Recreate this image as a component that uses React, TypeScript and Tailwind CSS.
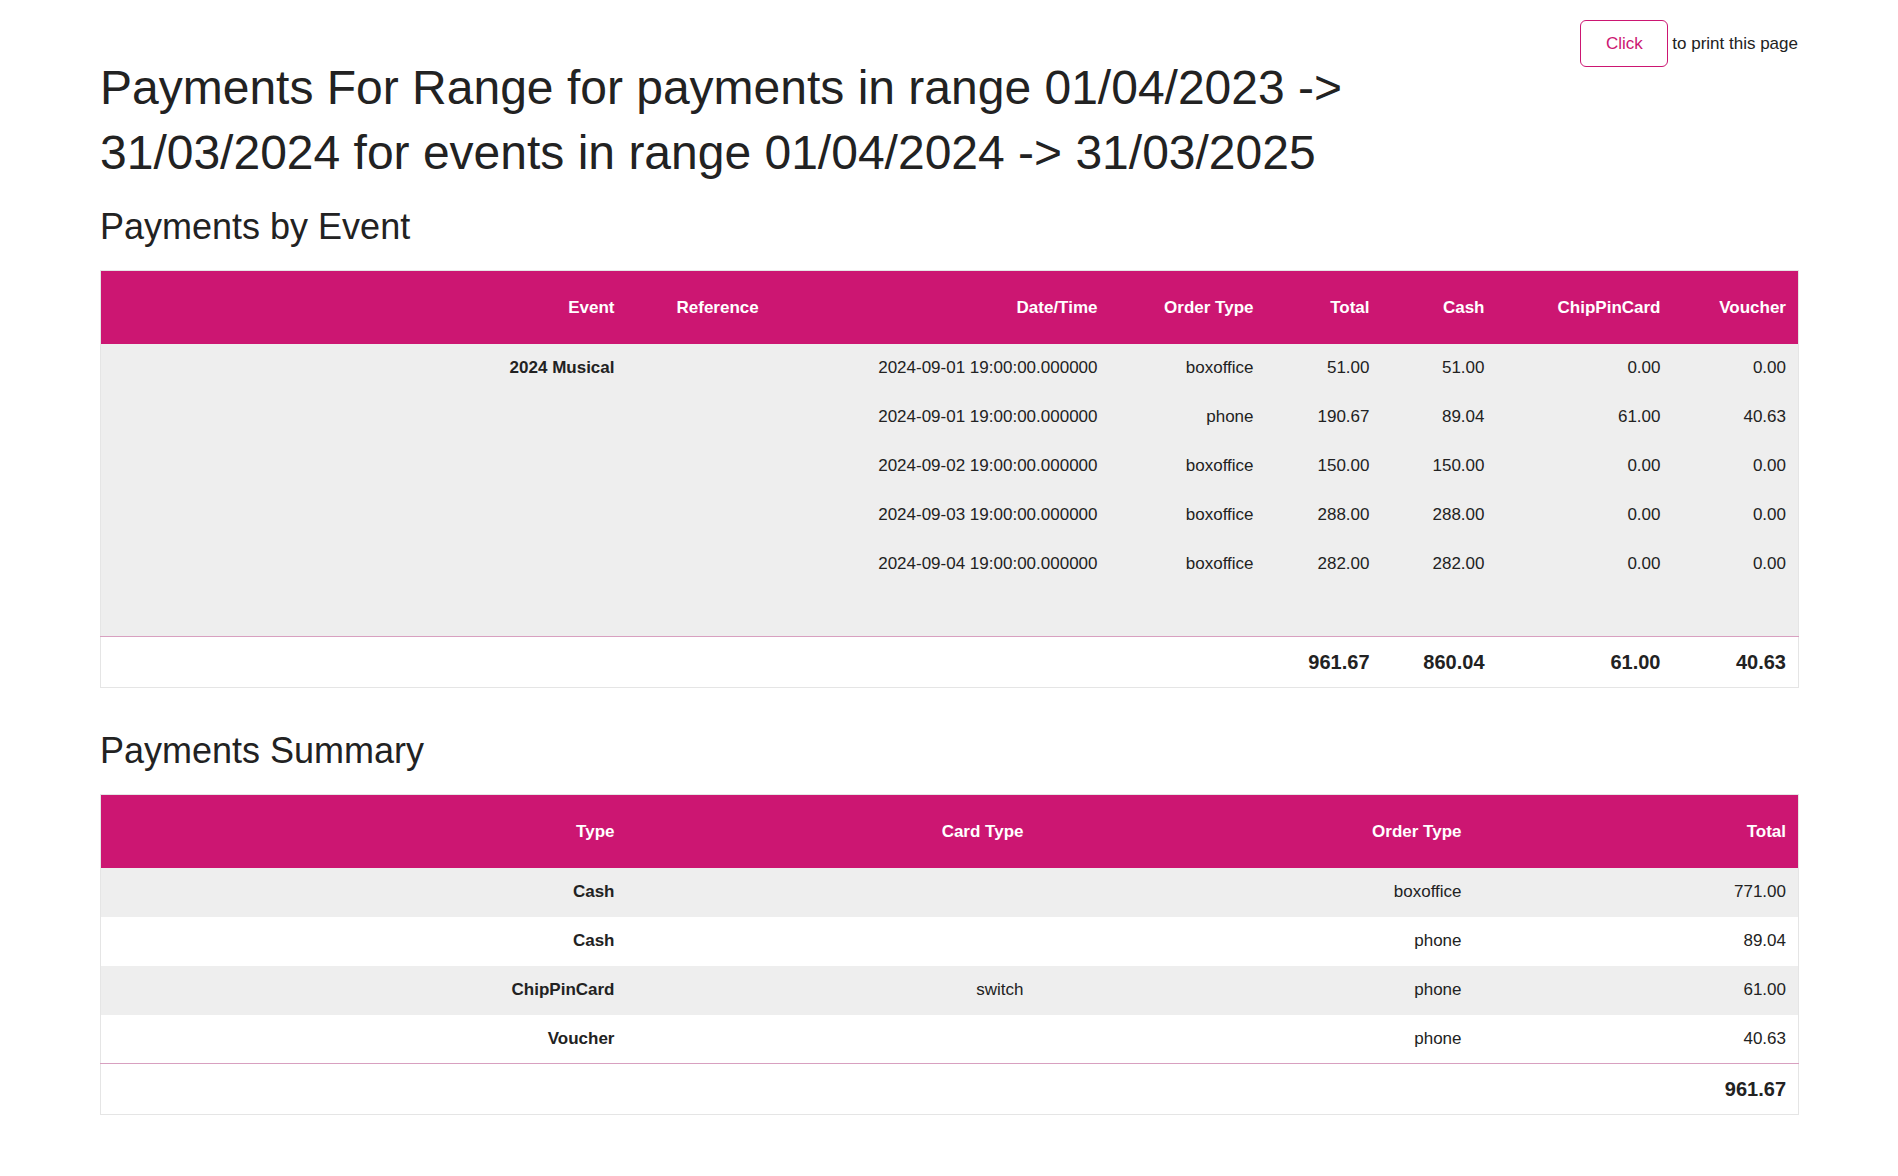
const pink = "bg-[#cc1672]";

const events = [
  ["2024-09-01 19:00:00.000000", "boxoffice", "51.00", "51.00", "0.00", "0.00"],
  ["2024-09-01 19:00:00.000000", "phone", "190.67", "89.04", "61.00", "40.63"],
  ["2024-09-02 19:00:00.000000", "boxoffice", "150.00", "150.00", "0.00", "0.00"],
  ["2024-09-03 19:00:00.000000", "boxoffice", "288.00", "288.00", "0.00", "0.00"],
  ["2024-09-04 19:00:00.000000", "boxoffice", "282.00", "282.00", "0.00", "0.00"],
];

const summary = [
  ["Cash", "", "boxoffice", "771.00"],
  ["Cash", "", "phone", "89.04"],
  ["ChipPinCard", "switch", "phone", "61.00"],
  ["Voucher", "", "phone", "40.63"],
];

export default function App() {
  return (
    <div className="min-h-screen bg-white px-[100px] pb-10 text-[#222] text-[17px]" style={{ fontFamily: '"Liberation Sans", Arial, sans-serif' }}>
      <div className="flex justify-end items-center pt-5">
        <button className="w-[88px] h-[47px] rounded-md border border-[#cc1672] text-[#cc1672] text-[17px] bg-white">Click</button>
        <span className="ml-1">to print this page</span>
      </div>
      <h1 className="text-[48px] leading-[65px] -mt-[12px] w-[1420px] text-[#222]">
        Payments For Range for payments in range 01/04/2023 -&gt; 31/03/2024 for events in range 01/04/2024 -&gt; 31/03/2025
      </h1>
      <h2 className="text-[36px] leading-[44px] mt-[20px] mb-[21px]">Payments by Event</h2>
      <table className="w-full table-fixed border border-[#e5e5e5] border-collapse">
        <colgroup>
          <col className="w-[526px]" />
          <col className="w-[234px]" />
          <col className="w-[249px]" />
          <col className="w-[156px]" />
          <col className="w-[116px]" />
          <col className="w-[115px]" />
          <col className="w-[176px]" />
          <col className="w-[126px]" />
        </colgroup>
        <thead>
          <tr className={`${pink} text-white font-bold h-[73px]`}>
            <th className="text-right pr-3">Event</th>
            <th className="text-left pl-[50px]">Reference</th>
            <th className="text-right pr-3">Date/Time</th>
            <th className="text-right pr-3">Order Type</th>
            <th className="text-right pr-3">Total</th>
            <th className="text-right pr-3">Cash</th>
            <th className="text-right pr-3">ChipPinCard</th>
            <th className="text-right pr-3">Voucher</th>
          </tr>
        </thead>
        <tbody className="bg-[#eeeeee]">
          {events.map((r, i) => (
            <tr key={i} className="h-[49px]">
              <td className="text-right pr-3 font-bold">{i === 0 ? "2024 Musical" : ""}</td>
              <td />
              {r.map((c, j) => (
                <td key={j} className="text-right pr-3">{c}</td>
              ))}
            </tr>
          ))}
          <tr className="h-[48px]"><td colSpan={8} /></tr>
        </tbody>
        <tfoot>
          <tr className="h-[51px] border-t border-[#d8a0c0] font-bold text-[20px]">
            <td colSpan={4} />
            <td className="text-right pr-3">961.67</td>
            <td className="text-right pr-3">860.04</td>
            <td className="text-right pr-3">61.00</td>
            <td className="text-right pr-3">40.63</td>
          </tr>
        </tfoot>
      </table>
      <h2 className="text-[36px] leading-[44px] mt-[41px] mb-[21px]">Payments Summary</h2>
      <table className="w-full table-fixed border border-[#e5e5e5] border-collapse">
        <colgroup>
          <col className="w-[526px]" />
          <col className="w-[409px]" />
          <col className="w-[438px]" />
          <col className="w-[325px]" />
        </colgroup>
        <thead>
          <tr className={`${pink} text-white font-bold h-[73px]`}>
            <th className="text-right pr-3">Type</th>
            <th className="text-right pr-3">Card Type</th>
            <th className="text-right pr-3">Order Type</th>
            <th className="text-right pr-3">Total</th>
          </tr>
        </thead>
        <tbody>
          {summary.map((r, i) => (
            <tr key={i} className={`h-[49px] ${i % 2 === 0 ? "bg-[#eeeeee]" : "bg-white"}`}>
              <td className="text-right pr-3 font-bold">{r[0]}</td>
              <td className="text-right pr-3">{r[1]}</td>
              <td className="text-right pr-3">{r[2]}</td>
              <td className="text-right pr-3">{r[3]}</td>
            </tr>
          ))}
        </tbody>
        <tfoot>
          <tr className="h-[51px] border-t border-[#d8a0c0] font-bold text-[20px]">
            <td colSpan={3} />
            <td className="text-right pr-3">961.67</td>
          </tr>
        </tfoot>
      </table>
    </div>
  );
}
